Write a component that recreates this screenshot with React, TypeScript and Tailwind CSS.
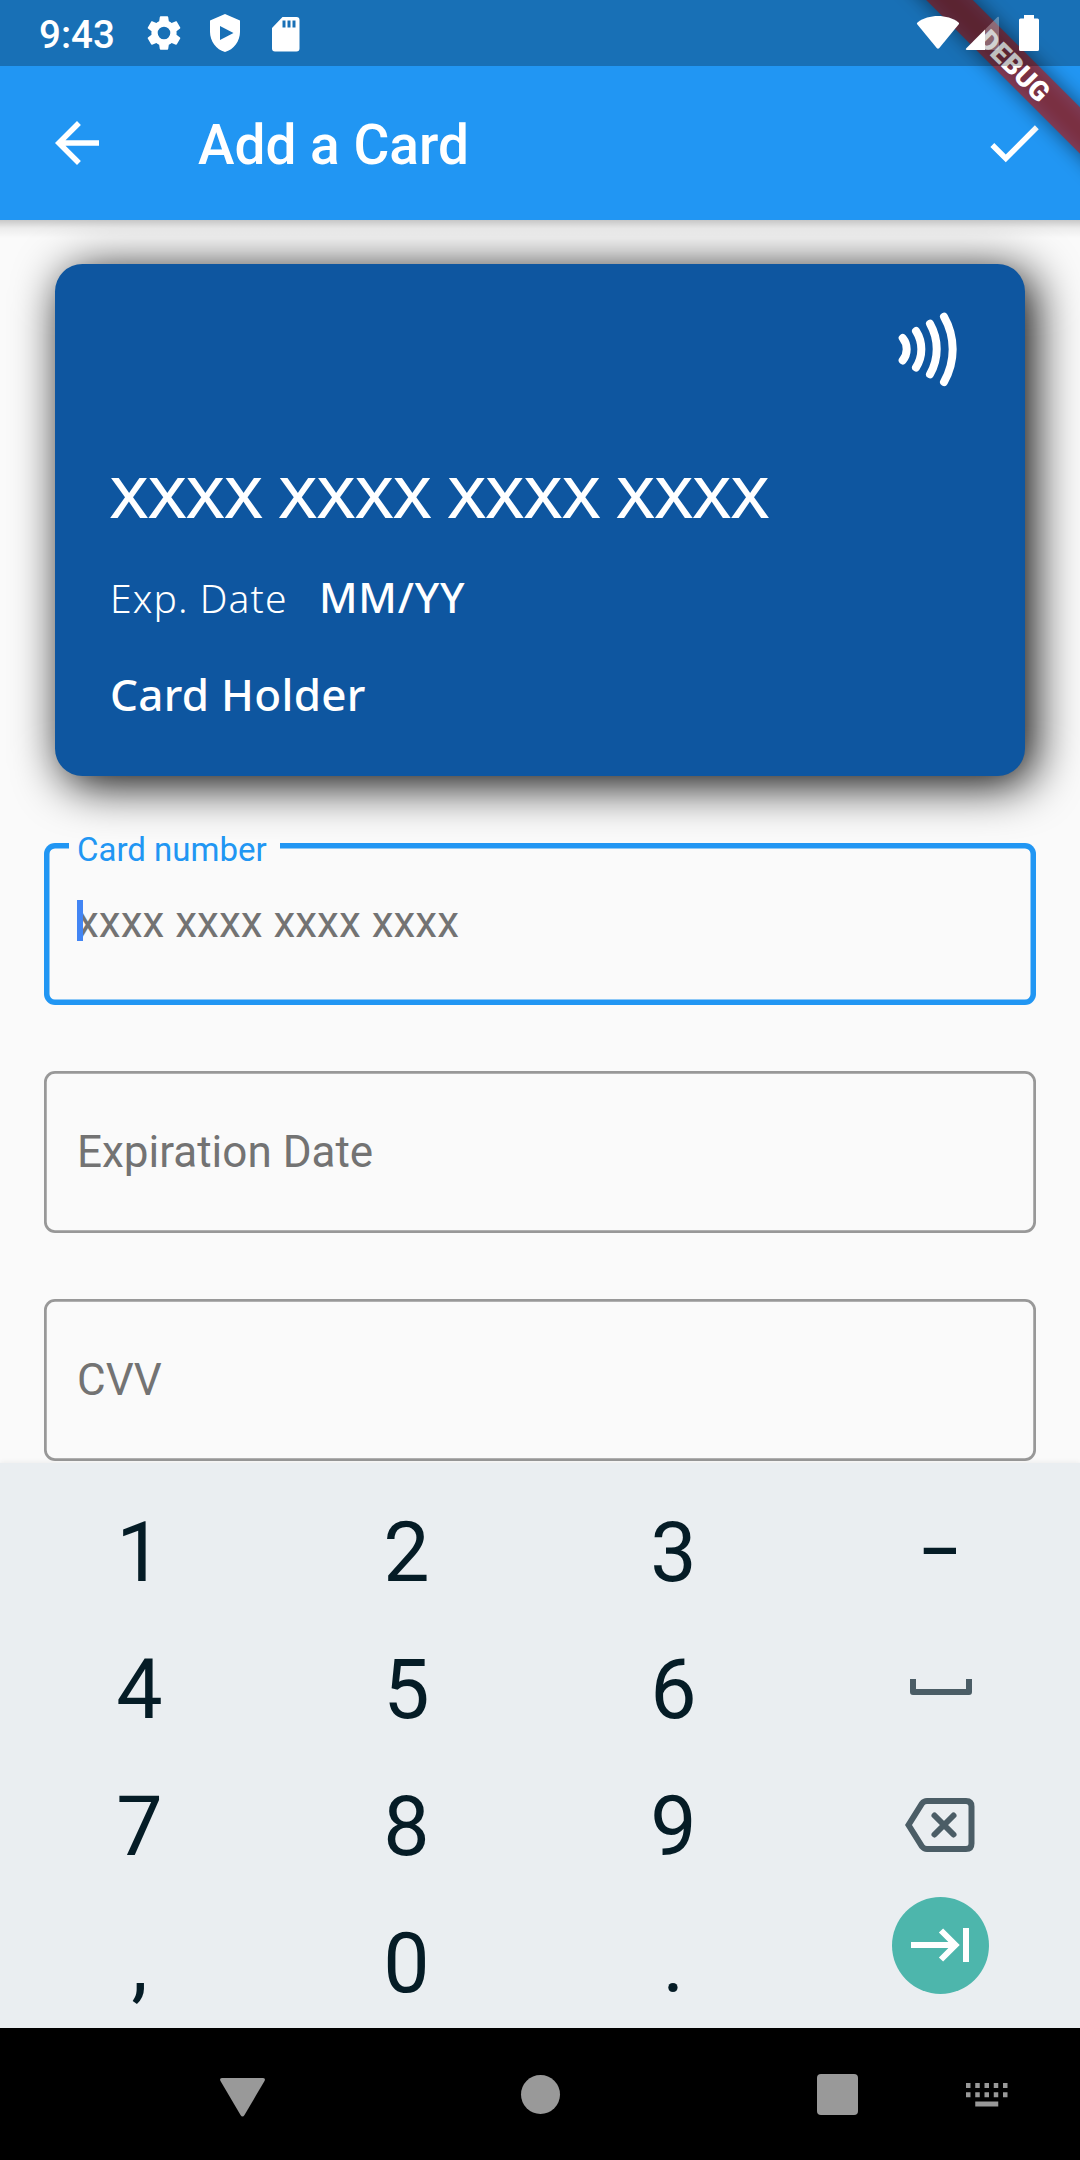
import type { ReactNode } from "react";

function StatusBar() {
  return (
    <div className="relative z-20 flex h-[66px] items-center bg-black/25 pl-[39px] text-white">
      <span className="mt-[3px] w-[76px] text-[38.5px] leading-[66px] font-medium">9:43</span>
      <svg className="ml-[28px] size-[42px]" viewBox="0 0 24 24" fill="currentColor">
        <path d="M19.14 12.94c.04-.3.06-.61.06-.94 0-.32-.02-.64-.07-.94l2.03-1.58c.18-.14.23-.41.12-.61l-1.92-3.32c-.12-.22-.37-.29-.59-.22l-2.39.96c-.5-.38-1.03-.7-1.62-.94l-.36-2.54c-.04-.24-.24-.41-.48-.41h-3.84c-.24 0-.43.17-.47.41l-.36 2.54c-.59.24-1.13.57-1.62.94l-2.39-.96c-.22-.08-.47 0-.59.22L2.74 8.87c-.12.21-.08.47.12.61l2.03 1.58c-.05.3-.09.63-.09.94s.02.64.07.94l-2.03 1.58c-.18.14-.23.41-.12.61l1.92 3.32c.12.22.37.29.59.22l2.39-.96c.5.38 1.03.7 1.62.94l.36 2.54c.05.24.24.41.48.41h3.84c.24 0 .44-.17.47-.41l.36-2.54c.59-.24 1.13-.56 1.62-.94l2.39.96c.22.08.47 0 .59-.22l1.92-3.32c.12-.22.07-.47-.12-.61l-2.01-1.58zM12 15.6A3.6 3.6 0 1 1 12 8.400a3.6 3.6 0 0 1 0 7.200z" />
      </svg>
      <svg className="ml-[24px] h-[38px] w-[32px]" viewBox="0 0 32 38" fill="currentColor">
        <path fillRule="evenodd" d="M16 0 31 6.500V18c0 9-6.200 17.600-15 20C7.200 35.600 1 27 1 18V6.500zM11 12v14l13.500-7z" />
      </svg>
      <svg className="mt-px ml-[30px] h-[36px] w-[30px]" viewBox="0 0 30 36" fill="currentColor">
        <path fillRule="evenodd" d="M11.500 1H25.500a3 3 0 0 1 3 3V32.500a3 3 0 0 1-3 3H4a3 3 0 0 1-3-3V12zM11.500 4.500v7h3v-7zM16.500 4.500v7h3v-7zM21.500 4.500v7h3v-7z" />
      </svg>
      <svg className="ml-auto h-[36px] w-[44px]" viewBox="0 0 44 36" fill="currentColor">
        <path d="M1.200 9.200Q.500 8.200 1.500 7.400C13-1 31-1 42.500 7.400Q43.500 8.200 42.800 9.200L23.300 33Q22 34.300 20.700 33z" />
      </svg>
      <svg className="ml-[5px] h-[36px] w-[34px]" viewBox="0 0 34 36" fill="currentColor">
        <path d="M20 14.500 32.500 2Q34 1 34 3V33q0 2-2 2H20z" opacity=".3" />
        <path d="M20 14.500V35H2q-2 0-.700-1.700z" />
      </svg>
      <svg className="mr-[41px] ml-[20px] h-[36px] w-[20px]" viewBox="0 0 20 36" fill="currentColor">
        <path d="M5 0H15V3.500H18.500Q20 3.500 20 5V34.500Q20 36 18.500 36H1.500Q0 36 0 34.500V5Q0 3.500 1.500 3.500H5z" />
      </svg>
    </div>
  );
}

function AppBar() {
  return (
    <div className="flex h-[154px] items-center pr-[33px] pl-[44px] text-white">
      <svg className="size-[66px]" viewBox="0 0 24 24" fill="currentColor">
        <path d="M20 11H7.830l5.590-5.590L12 4l-8 8 8 8 1.410-1.410L7.830 13H20v-2z" />
      </svg>
      <h1 className="mt-[3px] ml-[88px] text-[55px] leading-[64px] font-medium">Add a Card</h1>
      <svg className="ml-auto size-[66px]" viewBox="0 0 24 24" fill="currentColor">
        <path d="M9 16.170 4.830 12l-1.420 1.410L9 19 21 7l-1.410-1.410z" />
      </svg>
    </div>
  );
}

function DebugBanner() {
  return (
    <div className="absolute top-0 right-0 z-10 size-[240px] overflow-hidden">
      <div className="absolute top-[46.500px] left-[-27px] h-[33px] w-[400px] rotate-45 bg-black/50 blur-[10px]" />
      <div className="absolute top-[46.500px] left-[-27px] flex h-[33px] w-[400px] rotate-45 items-center justify-center bg-[#b71c1c]/63 pt-[1px] pl-[5px] text-[27.500px] leading-[33px] font-black text-white">
        DEBUG
      </div>
    </div>
  );
}

function PaymentCard() {
  return (
    <section className="mx-[11px] flex h-[512px] flex-col rounded-[27.500px] bg-[#0e56a0] px-[55px] font-['Noto_Sans'] text-white shadow-[8px_8px_48px_#000]">
      <svg className="mt-[46px] mr-[10px] h-[78px] w-[62px] self-end" viewBox="898 310 62 78" fill="none" stroke="currentColor" strokeWidth="8" strokeLinecap="round">
        <path d="M902.700 338a17.700 17.700 0 0 1 0 22.400M916 331a33.900 33.900 0 0 1 0 36.500M930 323.700a51 51 0 0 1 0 50.600M944 316.700a65.800 65.800 0 0 1 0 65.300" />
      </svg>
      <p className="mt-[73px] origin-left scale-x-[1.115] text-[56px] leading-[70px] font-medium whitespace-nowrap">
        XXXX XXXX XXXX XXXX
      </p>
      <div className="mt-[41px] flex h-[50px] items-baseline">
        <span className="w-[180px] text-[39px] leading-[50px] font-[350] tracking-[1.100px] whitespace-nowrap">Exp. Date</span>
        <span className="ml-[29px] text-[42px] leading-[50px] font-medium tracking-[0.800px]">MM/YY</span>
      </div>
      <p className="mt-[45px] text-[44px] leading-[54px] font-medium tracking-[0.300px]">Card Holder</p>
    </section>
  );
}

function Field({ label }: { label: string }) {
  return (
    <div className="flex h-[162px] items-center rounded-[11px] px-[33px] text-[44px] text-[#737373] shadow-[inset_0_0_0_2.750px_#989898]">
      {label}
    </div>
  );
}

function ActiveField() {
  return (
    <div className="relative flex h-[162.500px] items-center rounded-[11px] px-[33px] text-[44px] text-[#737373] shadow-[inset_0_0_0_5.500px_#2196f3]">
      <span className="absolute top-[-4px] left-[25px] w-[211px] bg-[#fafafa] pl-[8px] text-[33px] leading-[22px] text-[#2196f3]">
        Card number
      </span>
      <span className="relative -mt-[4px]">
        xxxx xxxx xxxx xxxx
        <span className="absolute top-[11px] left-0 h-[41px] w-[5.500px] bg-[#4285f4]" />
      </span>
    </div>
  );
}

function SpaceIcon() {
  return (
    <svg className="-mt-[5px] h-[16px] w-[62px]" viewBox="0 0 62 16" fill="none" stroke="#4b5d66" strokeWidth="6" strokeLinejoin="round">
      <path d="M3 0V13H59V0" />
    </svg>
  );
}

function BackspaceIcon() {
  return (
    <svg className="-mt-[3px] mr-[2px] h-[56px] w-[70px]" viewBox="0 0 70 56" fill="none" stroke="#4b5d66" strokeWidth="6">
      <path d="M22 4H61Q66.500 4 66.500 9.500V46.500Q66.500 52 61 52H22Q19 52 17 49.500L3.500 28 17 6.500Q19 4 22 4Z" />
      <path d="M29.500 18.500 48.500 37.500M48.500 18.500 29.500 37.500" strokeLinecap="round" />
    </svg>
  );
}

function NextButton() {
  return (
    <div className="mb-[37px] flex size-[97px] items-center justify-center rounded-full bg-[#4db6ac]">
      <svg className="mr-[2px] size-[60px]" viewBox="0 0 60 60" fill="none" stroke="#fff" strokeWidth="6">
        <path d="M1 30H46M31 15.500 45.500 30 31 44.500M56 13V47" />
      </svg>
    </div>
  );
}

const keys: ReactNode[] = [
  "1", "2", "3", <span className="scale-x-[0.800]">–</span>,
  "4", "5", "6", <SpaceIcon />,
  "7", "8", "9", <BackspaceIcon />,
  ",", "0", ".", <NextButton />,
];

function Keyboard() {
  return (
    <div className="relative grid h-[565px] auto-rows-[137px] grid-cols-4 bg-[#eaeef1] px-[6px] pt-[21px] text-[82.500px] text-[#051c26] shadow-[0_-1px_5px_#0000000f]">
      {keys.map((key, i) => (
        <div key={i} className="flex items-center justify-center">
          {key}
        </div>
      ))}
    </div>
  );
}

const dotColumns = [0, 9.250, 18.500, 27.750, 37];

function NavBar() {
  return (
    <nav className="relative flex h-[132px] items-center bg-black pl-[219px] text-[#999]">
      <svg className="mt-[5px] h-[40px] w-[47px]" viewBox="0 0 47 40" fill="currentColor">
        <path d="M3.500 1H43.500Q47 1 45.500 4L25.500 38Q23.500 41 21.500 38L1.500 4Q0 1 3.500 1z" />
      </svg>
      <div className="ml-[255px] size-[39px] rounded-full bg-current" />
      <div className="ml-[257px] size-[41px] rounded-[4px] bg-current" />
      <svg className="mt-[2px] ml-[108px] h-[24px] w-[42px]" viewBox="0 0 42 24" fill="currentColor">
        {dotColumns.map((x) => (
          <path key={x} d={`M${x} 0h4.500v5h-4.500zM${x} 9.200h4.500v5h-4.500z`} />
        ))}
        <path d="M9.250 18.500h23v5h-23z" />
      </svg>
    </nav>
  );
}

export default function App() {
  return (
    <div className="relative flex h-[2160px] w-[1080px] flex-col overflow-hidden bg-[#fafafa] font-[Roboto,sans-serif]">
      <header className="relative bg-[#2196f3]">
        <StatusBar />
        <AppBar />
        <DebugBanner />
      </header>
      <main className="flex h-[1243px] flex-col bg-[linear-gradient(#0003,#0000000f_8px,#0000_18px)] px-[44px] pt-[44px]">
        <PaymentCard />
        <div className="mt-[66.500px] flex flex-col gap-[66px]">
          <ActiveField />
          <Field label="Expiration Date" />
          <Field label="CVV" />
        </div>
      </main>
      <Keyboard />
      <NavBar />
    </div>
  );
}
